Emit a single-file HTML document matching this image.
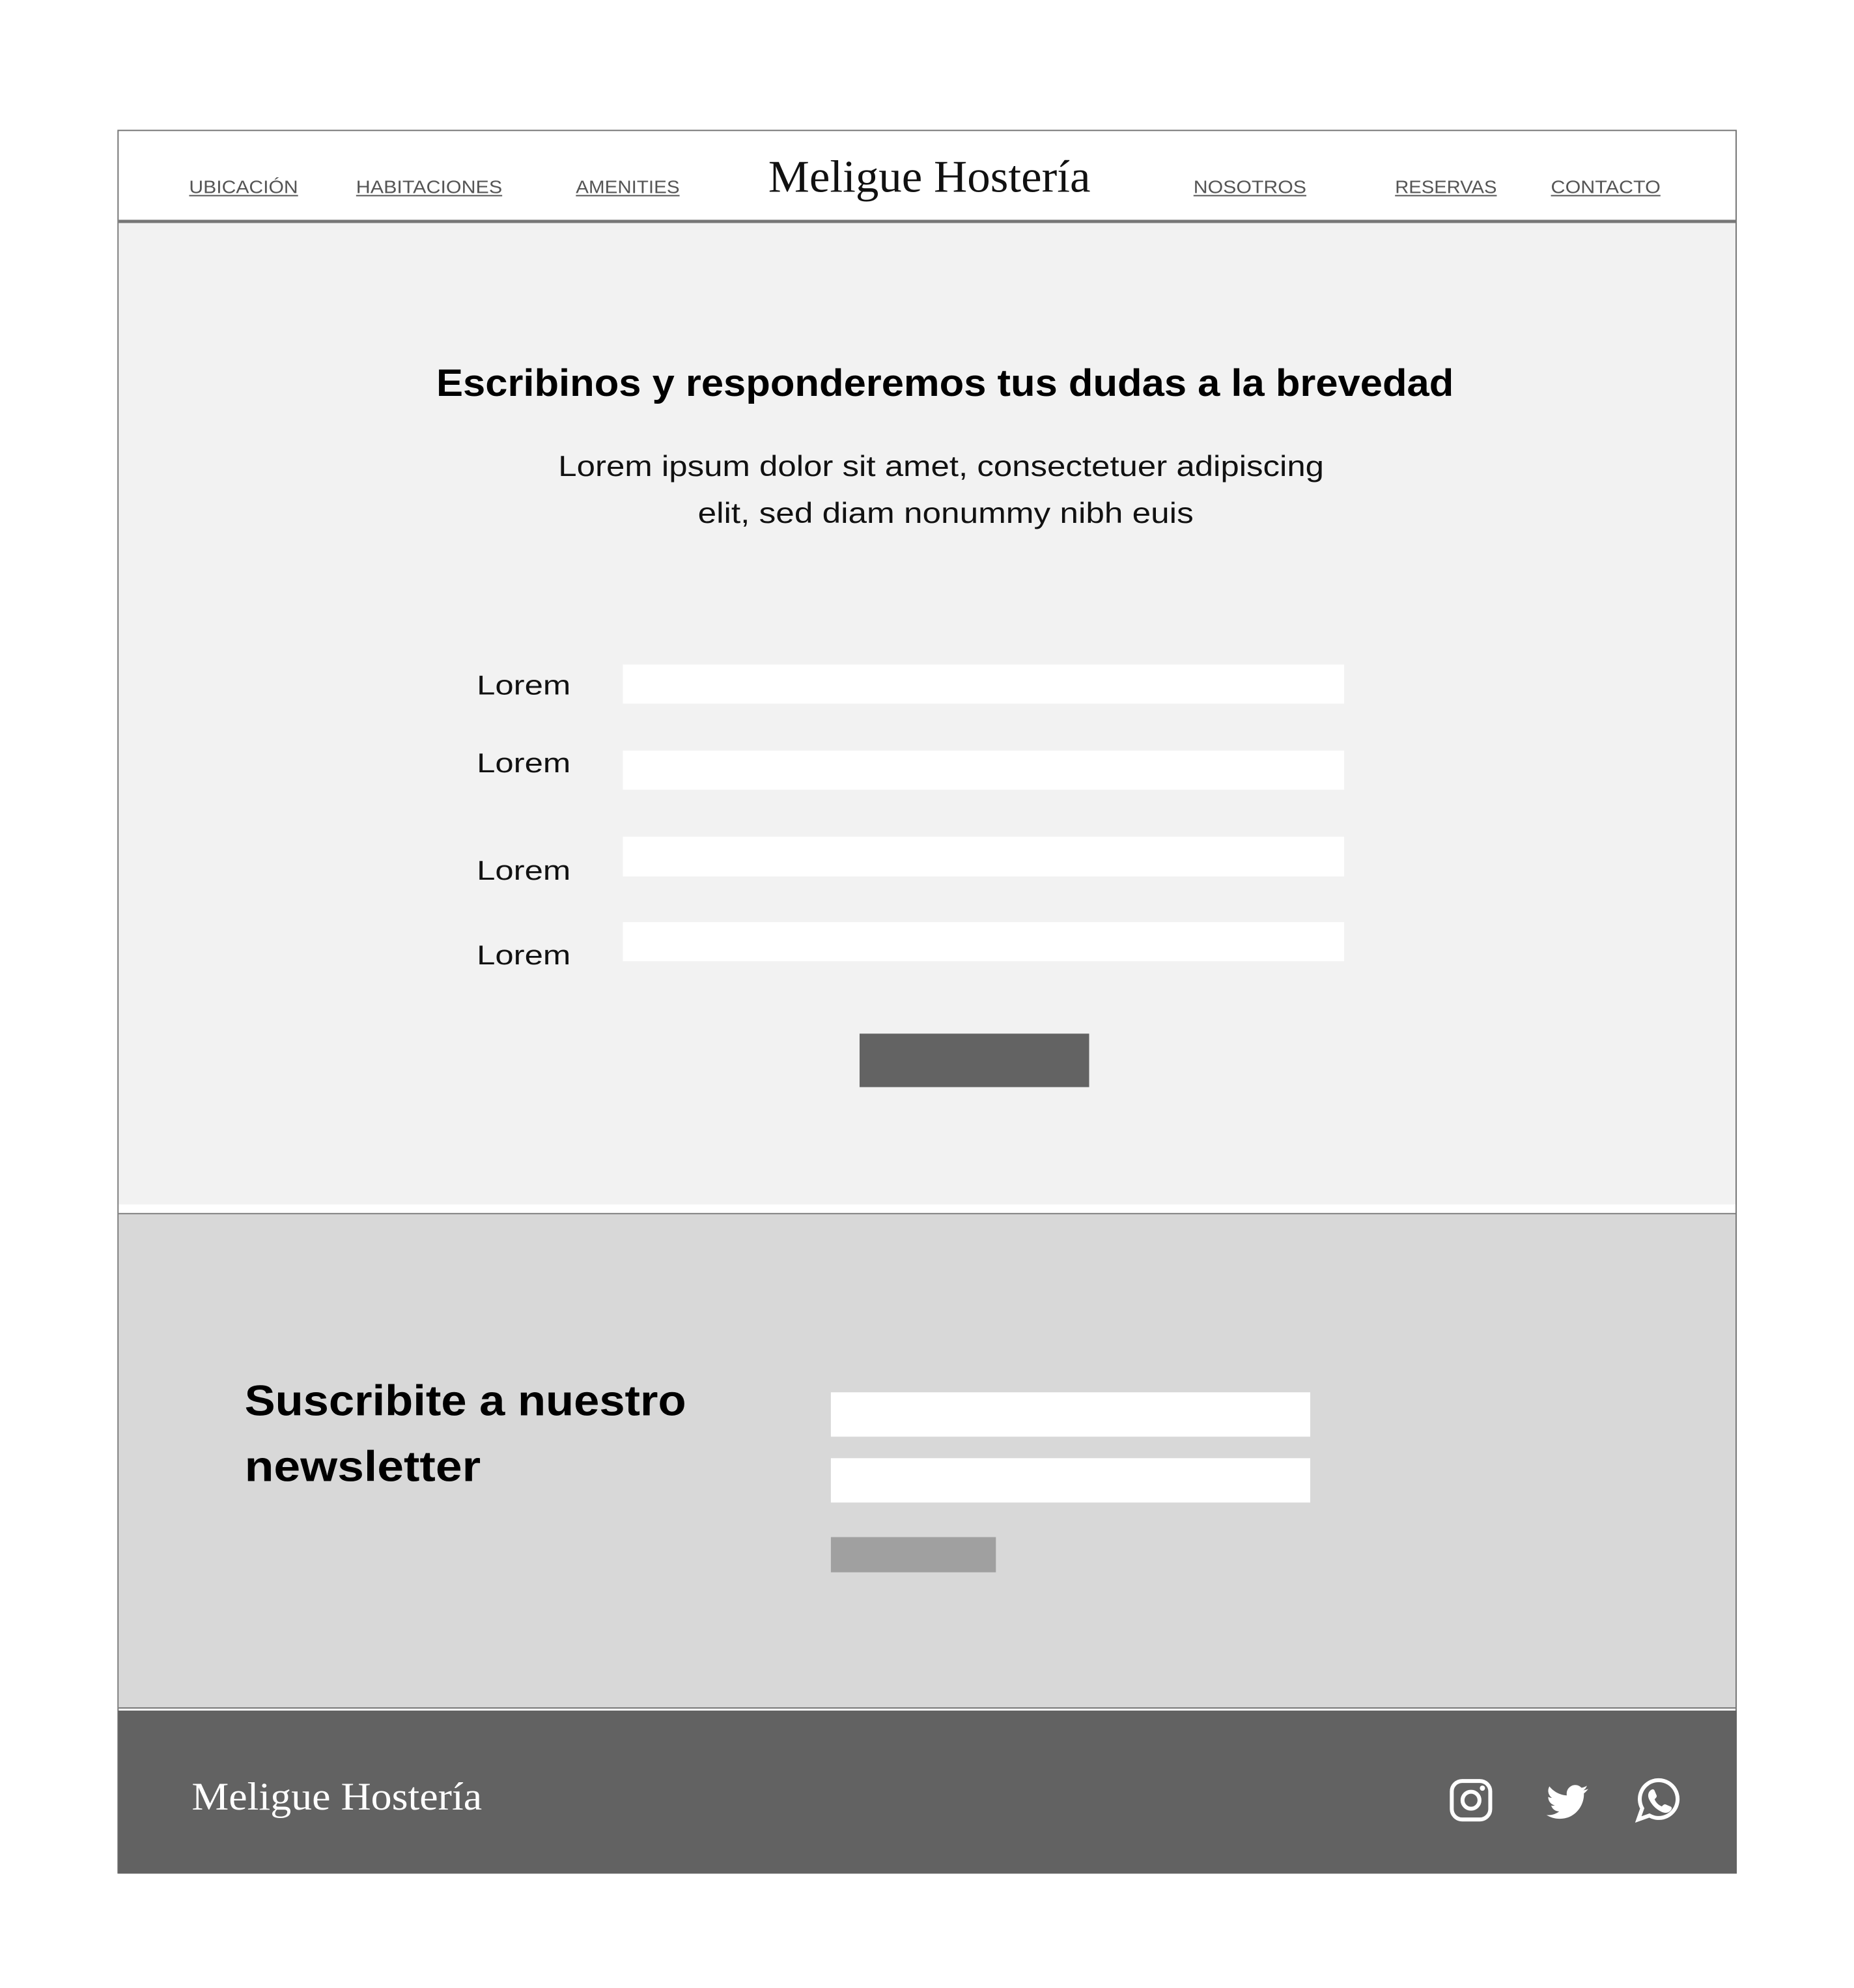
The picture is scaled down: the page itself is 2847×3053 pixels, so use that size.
<!DOCTYPE html>
<html><head><meta charset="utf-8"><style>
html,body{margin:0;padding:0;background:#fff;width:2847px;height:3053px;overflow:hidden}
svg{display:block}
</style></head><body>
<svg width="2847" height="3053" viewBox="0 0 2847 3053" xmlns="http://www.w3.org/2000/svg" font-family="Liberation Sans, sans-serif">
<rect width="2847" height="3053" fill="#fff"/>
<g transform="scale(1.0015)">
<rect x="181" y="200" width="2481" height="2672" fill="#fff" stroke="#777" stroke-width="2"/>
<rect x="182" y="337" width="2479" height="5" fill="#777"/>
<g fill="#555" font-size="28">
<text x="290" y="296" textLength="167" lengthAdjust="spacingAndGlyphs">UBICACIÓN</text>
<text x="546" y="296" textLength="224" lengthAdjust="spacingAndGlyphs">HABITACIONES</text>
<text x="883" y="296" textLength="159" lengthAdjust="spacingAndGlyphs">AMENITIES</text>
<text x="1830" y="296" textLength="173" lengthAdjust="spacingAndGlyphs">NOSOTROS</text>
<text x="2139" y="296" textLength="156" lengthAdjust="spacingAndGlyphs">RESERVAS</text>
<text x="2378" y="296" textLength="168" lengthAdjust="spacingAndGlyphs">CONTACTO</text>
</g>
<g fill="#555">
<rect x="290" y="299" width="167" height="2"/><rect x="546" y="299" width="224" height="2"/><rect x="883" y="299" width="159" height="2"/>
<rect x="1830" y="299" width="173" height="2"/><rect x="2139" y="299" width="156" height="2"/><rect x="2378" y="299" width="168" height="2"/>
</g>
<text x="1178" y="294" font-family="Liberation Serif, serif" font-size="70" fill="#111" textLength="494" lengthAdjust="spacingAndGlyphs">Meligue Hostería</text>
<rect x="182" y="342" width="2479" height="1505" fill="#f2f2f2"/>
<rect x="182" y="1847" width="2479" height="13" fill="#fff"/>
<text x="669" y="607" font-size="58" font-weight="bold" fill="#000" textLength="1560" lengthAdjust="spacingAndGlyphs">Escribinos y responderemos tus dudas a la brevedad</text>
<text x="856" y="730" font-size="44" fill="#111" textLength="1174" lengthAdjust="spacingAndGlyphs">Lorem ipsum dolor sit amet, consectetuer adipiscing</text>
<text x="1070" y="802" font-size="44" fill="#111" textLength="760" lengthAdjust="spacingAndGlyphs">elit, sed diam nonummy nibh euis</text>
<g font-size="42" fill="#111">
<text x="731" y="1065" textLength="144" lengthAdjust="spacingAndGlyphs">Lorem</text>
<text x="731" y="1184" textLength="144" lengthAdjust="spacingAndGlyphs">Lorem</text>
<text x="731" y="1349" textLength="144" lengthAdjust="spacingAndGlyphs">Lorem</text>
<text x="731" y="1479" textLength="144" lengthAdjust="spacingAndGlyphs">Lorem</text>
</g>
<g fill="#fff">
<rect x="955" y="1019" width="1106" height="60"/>
<rect x="955" y="1151" width="1106" height="60"/>
<rect x="955" y="1283" width="1106" height="61"/>
<rect x="955" y="1414" width="1106" height="60"/>
</g>
<rect x="1318" y="1585" width="352" height="82" fill="#636363"/>
<rect x="182" y="1860" width="2479" height="2" fill="#777"/>
<rect x="182" y="1862" width="2479" height="756" fill="#d8d8d8"/>
<rect x="182" y="2618" width="2479" height="2" fill="#777"/>
<text x="375" y="2170" font-size="66" font-weight="bold" fill="#000" textLength="677" lengthAdjust="spacingAndGlyphs">Suscribite a nuestro</text>
<text x="375" y="2271" font-size="66" font-weight="bold" fill="#000" textLength="362" lengthAdjust="spacingAndGlyphs">newsletter</text>
<rect x="1274" y="2135" width="735" height="68" fill="#fff"/>
<rect x="1274" y="2236" width="735" height="68" fill="#fff"/>
<rect x="1274" y="2357" width="253" height="54" fill="#a0a0a0"/>
<rect x="181" y="2623" width="2482" height="250" fill="#626262"/>
<text x="294" y="2775" font-family="Liberation Serif, serif" font-size="60" fill="#fff" textLength="445" lengthAdjust="spacingAndGlyphs">Meligue Hostería</text>
<g fill="none" stroke="#fff" stroke-width="6">
<rect x="2226" y="2731" width="59" height="59" rx="16"/>
<circle cx="2255.5" cy="2760.5" r="13"/>
</g>
<circle cx="2273" cy="2742" r="4" fill="#fff"/>
<path fill="#fff" transform="translate(2372,2731) scale(2.67)" d="M23.6 4.6c-.9.4-1.8.6-2.8.8 1-.6 1.8-1.6 2.1-2.7-.9.6-2 1-3.1 1.2-.9-1-2.2-1.6-3.6-1.6-2.7 0-4.9 2.2-4.9 4.9 0 .4 0 .8.1 1.1C7.4 8.1 3.8 6.1 1.4 3.1c-.4.7-.7 1.6-.7 2.5 0 1.7.9 3.2 2.2 4.1-.8 0-1.6-.2-2.2-.6v.1c0 2.4 1.7 4.4 3.9 4.8-.4.1-.8.2-1.3.2-.3 0-.6 0-.9-.1.6 2 2.4 3.4 4.6 3.4-1.7 1.3-3.8 2.1-6.1 2.1-.4 0-.8 0-1.2-.1 2.2 1.4 4.8 2.2 7.5 2.2 9.1 0 14-7.5 14-14v-.6c1-.7 1.8-1.6 2.5-2.5z"/>
<path fill="none" stroke="#fff" stroke-width="6" d="M2512 2790 l6 -17 a29 29 0 1 1 11 11 z"/>
<path fill="#fff" d="M2530 2746 c3 -3 6 -3 7 0 l3 7 c1 2 -1 4 -3 6 c2 5 6 9 11 11 c2 -2 4 -4 6 -3 l7 3 c3 1 3 4 0 7 c-3 3 -8 4 -14 1 c-8 -4 -14 -10 -18 -18 c-3 -6 -2 -11 1 -14z"/>
</g>
</svg>
</body></html>
